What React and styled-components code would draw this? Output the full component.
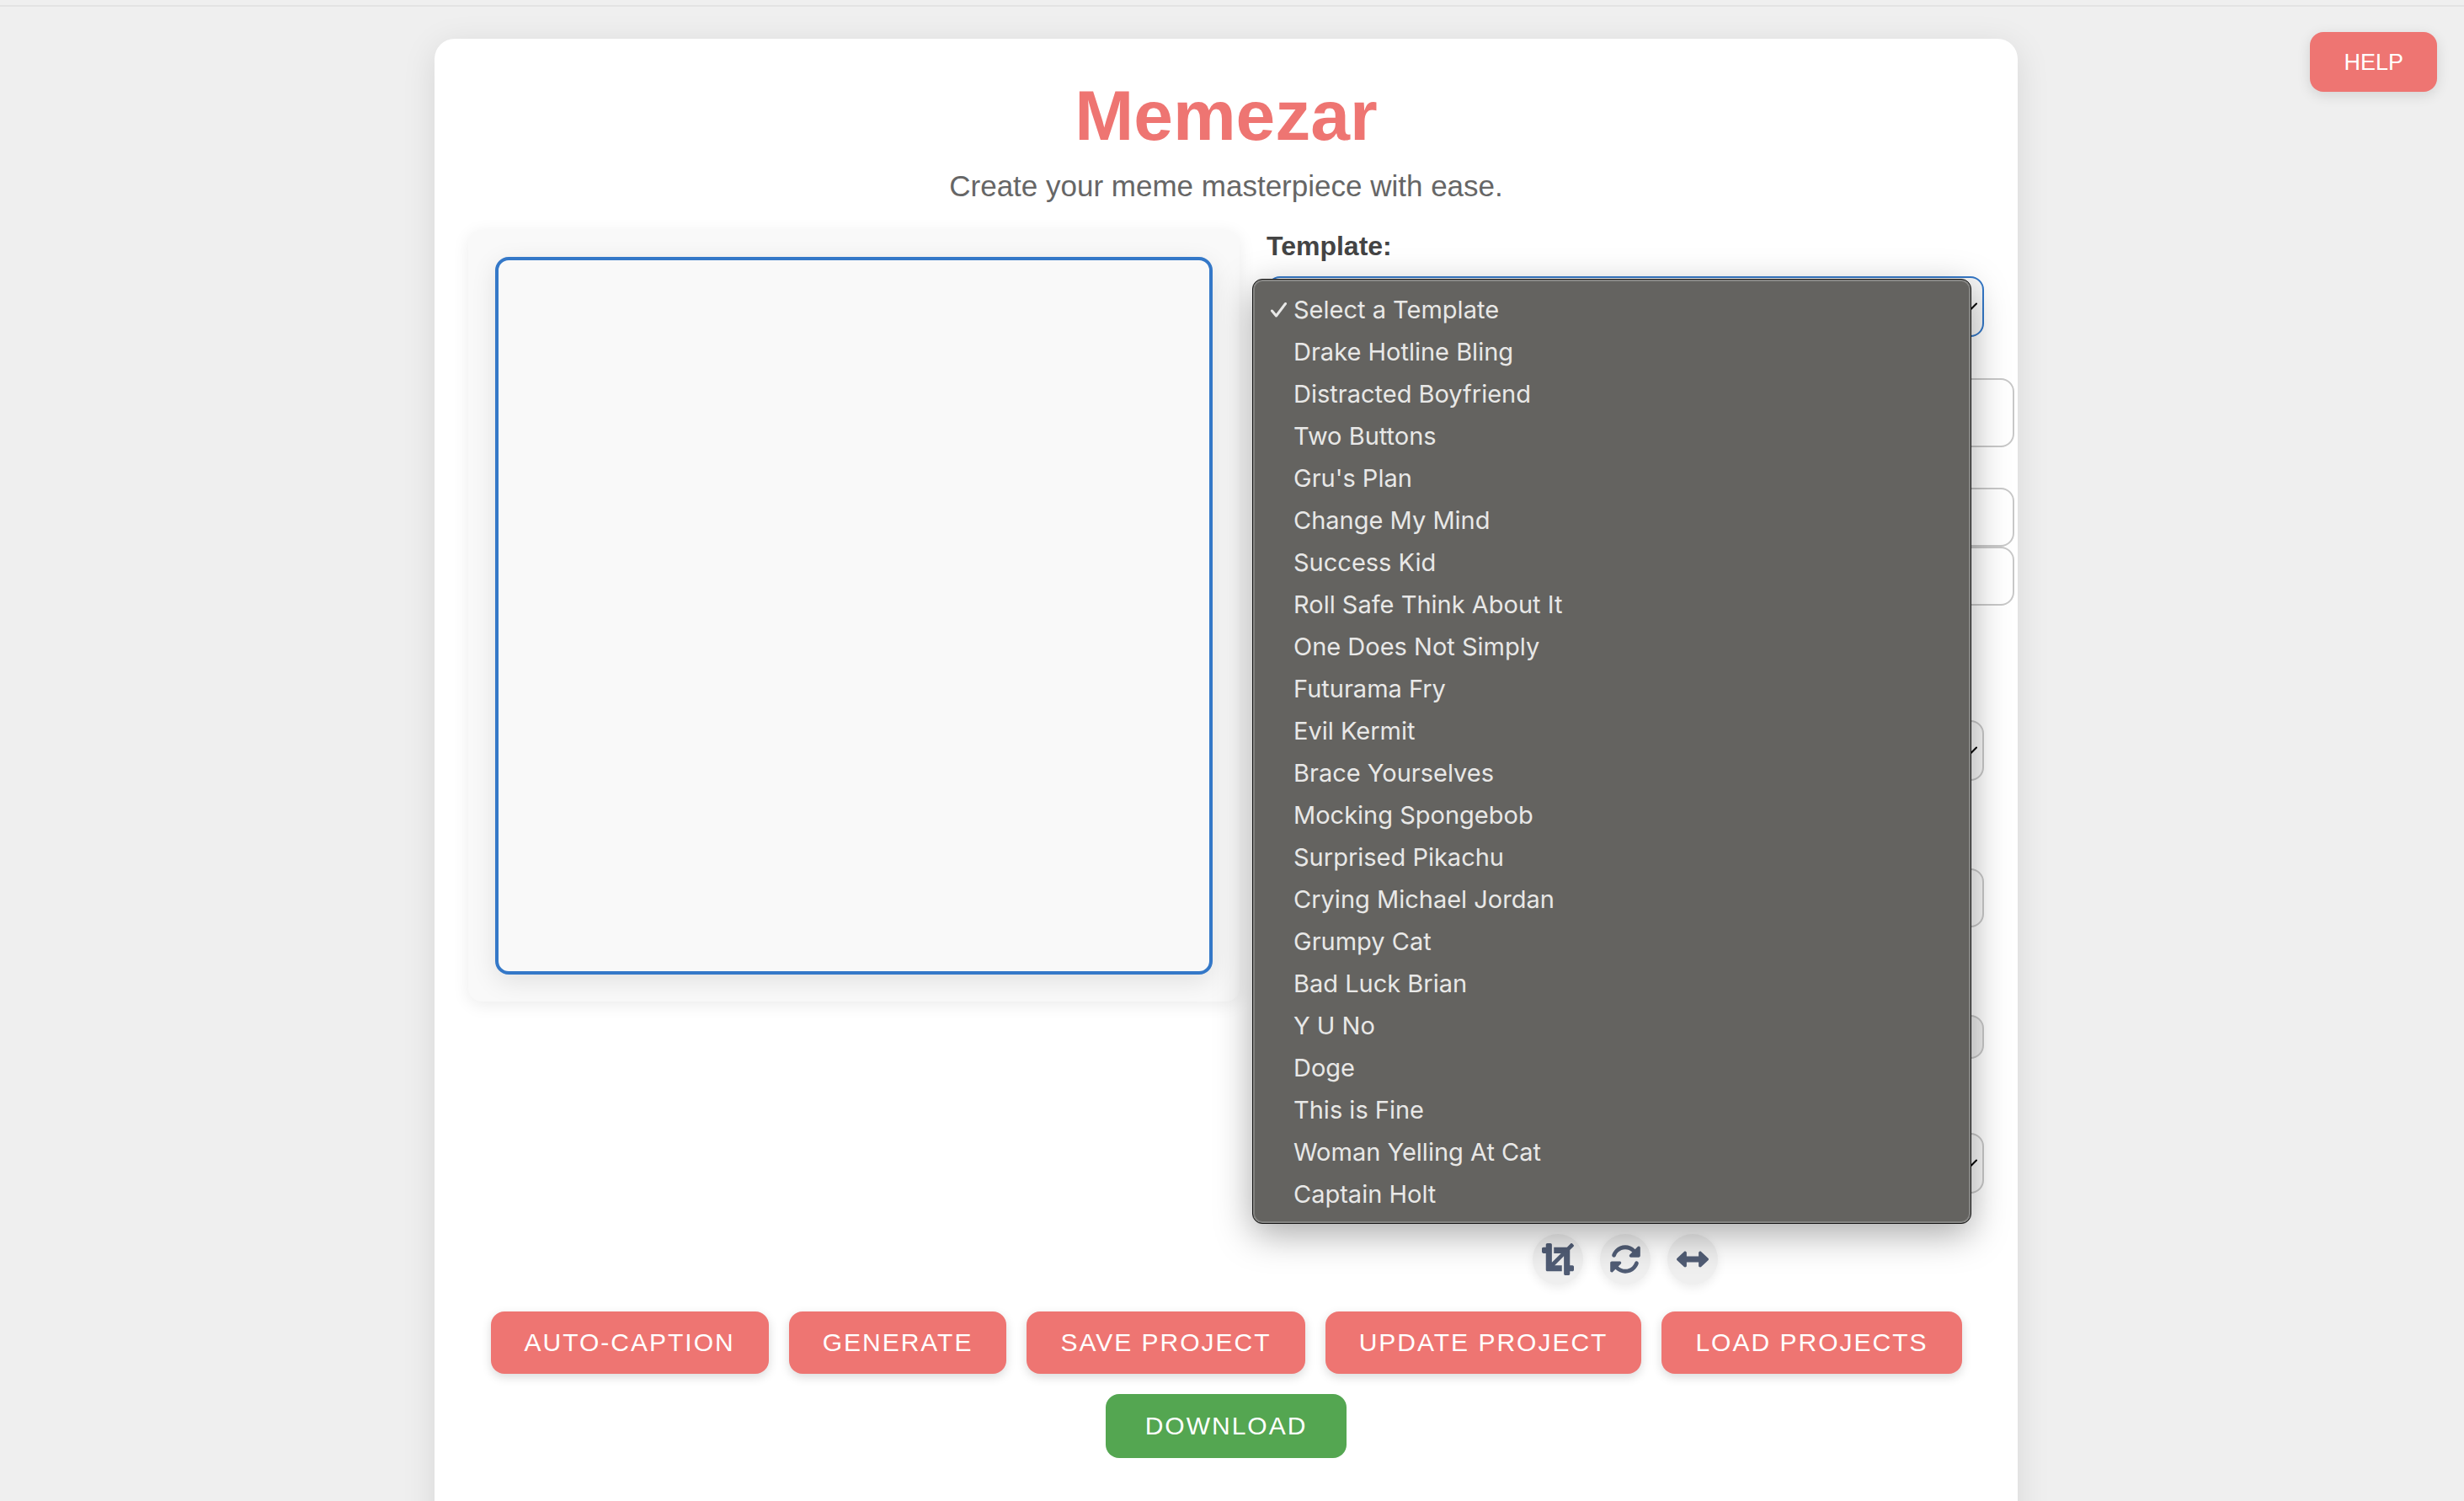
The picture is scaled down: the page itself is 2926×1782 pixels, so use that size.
import React from "react";
import styled, { createGlobalStyle } from "styled-components";
import { FaCrop } from "react-icons/fa";
import { FaRotate, FaLeftRight } from "react-icons/fa6";

const color = {
  page: "#efefef",
  accent: "#ee7572",
  download: "#54a651",
  blue: "#3478c8",
  border: "#c8c8c8",
  icon: "#505c74",
};

const templates = [
  "Select a Template",
  "Drake Hotline Bling",
  "Distracted Boyfriend",
  "Two Buttons",
  "Gru's Plan",
  "Change My Mind",
  "Success Kid",
  "Roll Safe Think About It",
  "One Does Not Simply",
  "Futurama Fry",
  "Evil Kermit",
  "Brace Yourselves",
  "Mocking Spongebob",
  "Surprised Pikachu",
  "Crying Michael Jordan",
  "Grumpy Cat",
  "Bad Luck Brian",
  "Y U No",
  "Doge",
  "This is Fine",
  "Woman Yelling At Cat",
  "Captain Holt",
];

const GlobalStyle = createGlobalStyle`
  *, *::before, *::after { box-sizing: border-box; }
  html { scrollbar-width: none; }
  body {
    margin: 0;
    background: ${color.page};
    color: #444;
    font-family: "Helvetica Neue", Helvetica, "Liberation Sans", Arial, sans-serif;
  }
  h1, p, ul { margin: 0; padding: 0; }
  button, input, select { font-family: inherit; }
`;

const TopRule = styled.div`
  margin-top: 6px;
  height: 2px;
  background: #e3e3e3;
`;

const Page = styled.div`
  display: flex;
  flex-direction: column;
`;

const Main = styled.main`
  display: flex;
  justify-content: center;
  padding: 38px 14px 0 0;
`;

const Card = styled.div`
  width: 100%;
  max-width: 1880px;
  min-height: 100vh;
  padding: 40px;
  background: #fff;
  border-radius: 24px;
  box-shadow: 0 8px 40px rgba(0, 0, 0, 0.1);
`;

const Title = styled.h1`
  color: ${color.accent};
  font-size: 84px;
  line-height: 102px;
  font-weight: 700;
  text-align: center;
`;

const Subtitle = styled.p`
  margin: 12px 0 32px;
  color: #666;
  font-size: 35px;
  line-height: 41px;
  text-align: center;
`;

const Workspace = styled.div`
  display: grid;
  grid-template-columns: minmax(0, 916fr) minmax(0, 852fr);
  align-items: start;
  gap: 32px;
`;

const Stage = styled.section`
  padding: 32px;
  background: #f9f9f9;
  border-radius: 16px;
  box-shadow: 0 4px 20px rgba(0, 0, 0, 0.08);
`;

const MemeCanvas = styled.canvas`
  display: block;
  width: 100%;
  aspect-ratio: 1;
  background: #f9f9f9;
  border: 4px solid ${color.blue};
  border-radius: 16px;
  box-shadow: 0 8px 30px rgba(0, 0, 0, 0.1);
`;

const Controls = styled.form`
  display: flex;
  flex-direction: column;
`;

const Label = styled.label`
  margin-bottom: 16px;
  font-size: 32px;
  line-height: 39px;
  font-weight: 700;
`;

const SelectBox = styled.div`
  position: relative;
  display: flex;
  margin-top: ${(p) => p.$space || 0}px;
`;

const Select = styled.select`
  appearance: none;
  width: 100%;
  height: 72px;
  padding: 0 16px;
  font-size: 32px;
  color: #444;
  background: #f8f8f8;
  border: 2px solid ${(p) => (p.$open ? color.blue : color.border)};
  border-radius: 16px;
  outline: none;
`;

const Chevron = styled.svg`
  position: absolute;
  right: 8px;
  top: 31px;
  width: 18px;
  height: 11px;
  fill: none;
  stroke: #000;
  stroke-width: 2;
  stroke-linecap: round;
`;

const TextInput = styled.input`
  width: calc(100% + 36px);
  height: ${(p) => (p.$tall ? 82 : 70)}px;
  margin-top: ${(p) => p.$space || 0}px;
  padding: 16px;
  font-size: 32px;
  background: #fff;
  border: 2px solid ${color.border};
  border-radius: 16px;
`;

const NumberInput = styled(TextInput)`
  width: 100%;
  background: #f8f8f8;
`;

const ColorButton = styled.button`
  height: 52px;
  margin-top: 104px;
  background: #efefef;
  border: 2px solid ${color.border};
  border-radius: 16px;
`;

const Menu = styled.ul`
  && {
    padding: 11px 0 9px;
  }
  position: absolute;
  z-index: 2;
  top: 3px;
  left: -17px;
  right: 15px;
  list-style: none;
  background: #646360;
  border: 1px solid #161616;
  border-radius: 12px;
  box-shadow: inset 0 0 0 2px #858583, 0 12px 44px rgba(0, 0, 0, 0.34);
`;

const MenuItem = styled.li`
  display: flex;
  align-items: center;
  height: 50px;
  padding-left: 20px;
  color: #e8e8e7;
  font-family: Inter, "Open Sans", sans-serif;
  font-size: 29px;
  line-height: 36px;
  white-space: nowrap;
`;

const TickSlot = styled.span`
  display: flex;
  flex: none;
  width: 28px;
`;

const ToolRow = styled.div`
  display: flex;
  justify-content: center;
  gap: 20px;
  margin-top: 48px;
`;

const ToolButton = styled.button`
  display: flex;
  align-items: center;
  justify-content: center;
  width: 60px;
  height: 60px;
  padding: 0;
  color: ${color.icon};
  font-size: 38px;
  background: ${color.page};
  border: 0;
  border-radius: 50%;
  box-shadow: 0 4px 12px rgba(0, 0, 0, 0.08);
`;

const Actions = styled.div`
  display: flex;
  flex-wrap: wrap;
  justify-content: center;
  gap: 24px;
  margin-top: 32px;
`;

const ActionButton = styled.button`
  height: 74px;
  padding: 0 40px;
  color: #fff;
  font-size: 30px;
  line-height: 36px;
  letter-spacing: 2px;
  text-transform: uppercase;
  background: ${color.accent};
  border: 0;
  border-radius: 16px;
  box-shadow: 0 4px 12px rgba(0, 0, 0, 0.15);
`;

const DownloadButton = styled(ActionButton)`
  height: 76px;
  padding: 0 47px;
  background: ${color.download};
  box-shadow: none;
`;

const HelpButton = styled.button`
  position: absolute;
  top: 38px;
  right: 32px;
  height: 71px;
  padding: 0 40px;
  color: #fff;
  font-size: 27px;
  line-height: 32px;
  background: ${color.accent};
  border: 0;
  border-radius: 16px;
  box-shadow: 0 4px 16px rgba(0, 0, 0, 0.12);
`;

function Arrow() {
  return (
    <Chevron viewBox="0 0 18 11" aria-hidden="true">
      <path d="M1 1.5 9 9.5 17 1.5" />
    </Chevron>
  );
}

function Tick() {
  return (
    <svg width="22" height="22" viewBox="0 0 22 22" aria-hidden="true">
      <path
        d="M2.5 12 7.5 18 18.5 3.5"
        fill="none"
        stroke="#e8e8e7"
        strokeWidth="3"
        strokeLinecap="round"
        strokeLinejoin="round"
      />
    </svg>
  );
}

function TemplateMenu() {
  return (
    <Menu role="listbox" aria-label="Template">
      {templates.map((name, index) => (
        <MenuItem key={name} role="option" aria-selected={index === 0}>
          <TickSlot>{index === 0 && <Tick />}</TickSlot>
          {name}
        </MenuItem>
      ))}
    </Menu>
  );
}

export default function App() {
  return (
    <Page>
      <GlobalStyle />
      <TopRule />
      <HelpButton type="button">HELP</HelpButton>
      <Main>
        <Card>
          <Title>Memezar</Title>
          <Subtitle>Create your meme masterpiece with ease.</Subtitle>
          <Workspace>
            <Stage>
              <MemeCanvas width="844" height="844" />
            </Stage>
            <Controls>
              <Label htmlFor="template">Template:</Label>
              <SelectBox>
                <Select id="template" $open />
                <Arrow />
                <TemplateMenu />
              </SelectBox>
              <TextInput type="file" aria-label="Image" $tall $space={49} />
              <TextInput type="text" aria-label="Top text" $space={48} />
              <TextInput type="text" aria-label="Bottom text" />
              <SelectBox $space={136}>
                <Select aria-label="Font" />
                <Arrow />
              </SelectBox>
              <NumberInput type="text" aria-label="Font size" $space={104} />
              <ColorButton type="button" aria-label="Text color" />
              <SelectBox $space={88}>
                <Select aria-label="Filter" />
                <Arrow />
              </SelectBox>
              <ToolRow>
                <ToolButton type="button" aria-label="Crop">
                  <FaCrop />
                </ToolButton>
                <ToolButton type="button" aria-label="Rotate">
                  <FaRotate />
                </ToolButton>
                <ToolButton type="button" aria-label="Flip">
                  <FaLeftRight />
                </ToolButton>
              </ToolRow>
            </Controls>
          </Workspace>
          <Actions>
            <ActionButton type="button">Auto-Caption</ActionButton>
            <ActionButton type="button">Generate</ActionButton>
            <ActionButton type="button">Save Project</ActionButton>
            <ActionButton type="button">Update Project</ActionButton>
            <ActionButton type="button">Load Projects</ActionButton>
            <DownloadButton type="button">Download</DownloadButton>
          </Actions>
        </Card>
      </Main>
    </Page>
  );
}
